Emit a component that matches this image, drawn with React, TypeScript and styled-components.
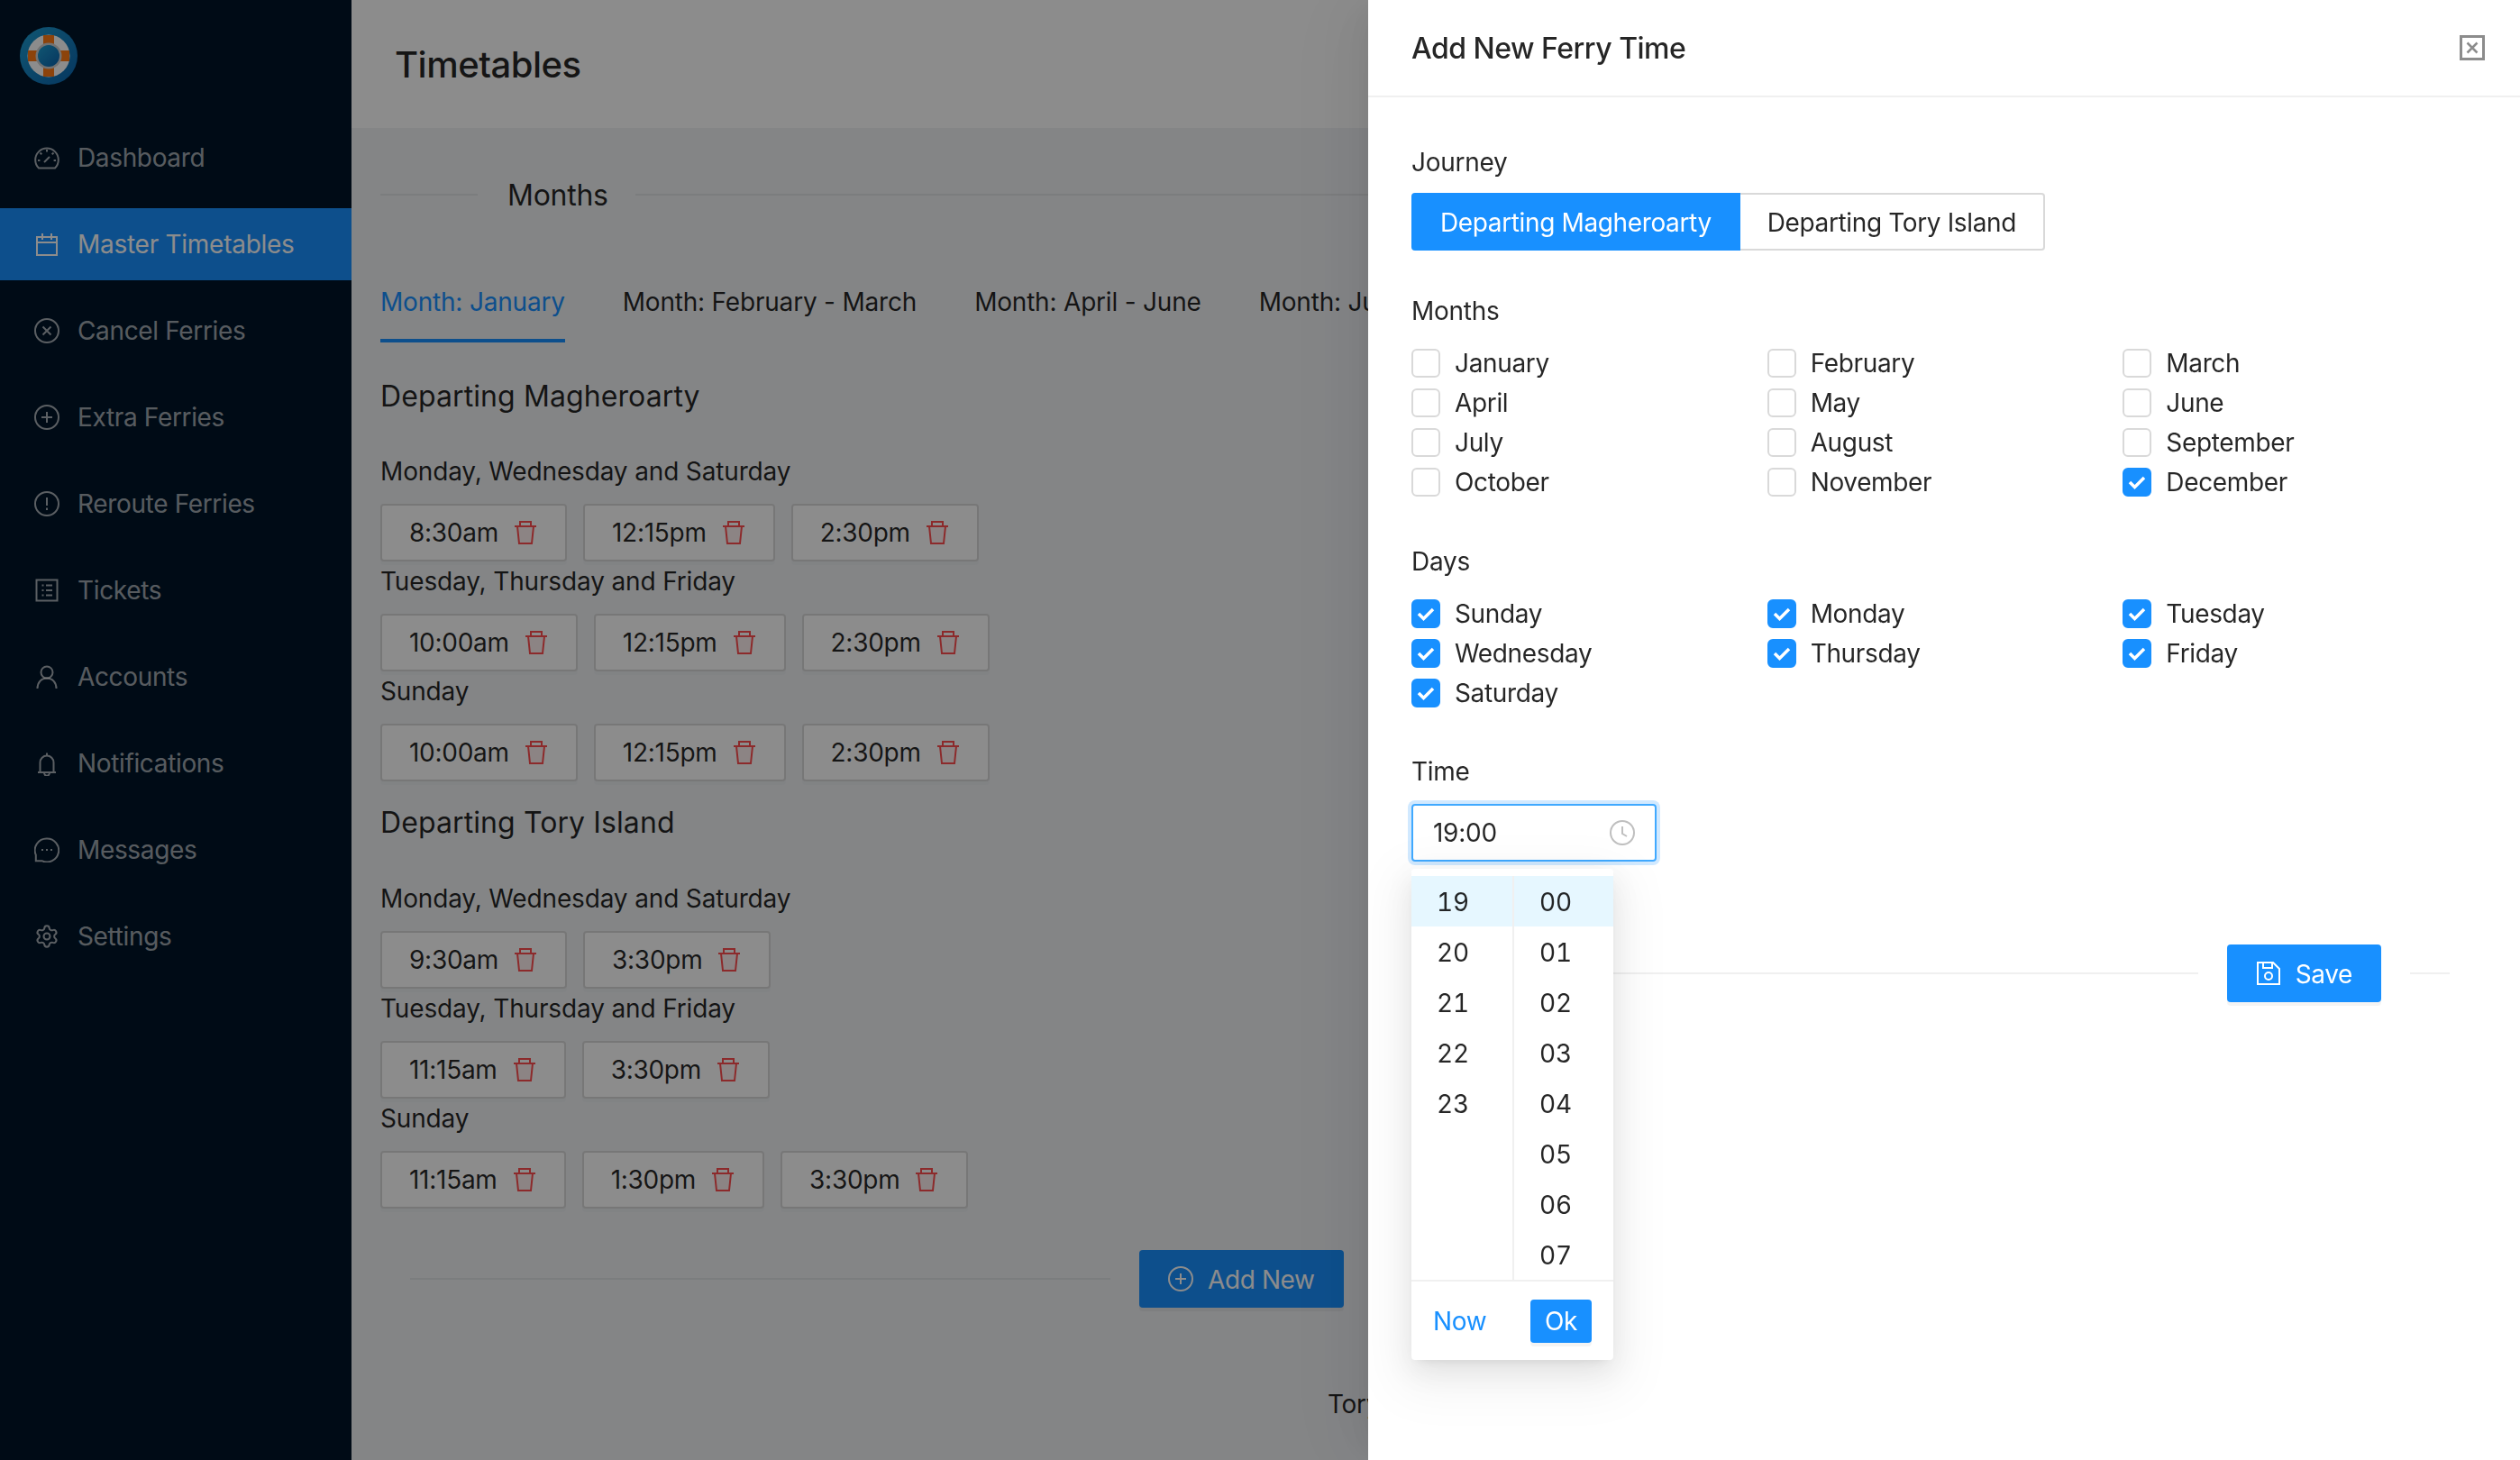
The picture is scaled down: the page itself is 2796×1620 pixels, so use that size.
import React, { FC, ReactNode } from "react";
import styled, { createGlobalStyle } from "styled-components";
import { Settings } from "lucide-react";

const GlobalStyle = createGlobalStyle`
  html, body {
    margin: 0;
    height: 100%;
    overflow: hidden;
    background: #f0f2f5;
    font-family: Inter, "Noto Sans", sans-serif;
    font-size: 28px;
    letter-spacing: -.27px;
    color: rgba(0, 0, 0, .85);
  }
  * { box-sizing: border-box; }
`;

const Page = styled.div`
  display: flex;
  width: 2796px;
  height: 1620px;
  overflow: hidden;
`;

const Sidebar = styled.aside`
  flex: 0 0 390px;
  background: #001529;
`;

const LogoBox = styled.div`
  height: 135px;
  padding: 30px 0 0 22px;
  svg { display: block; }
`;

const MenuList = styled.nav`
  display: flex;
  flex-direction: column;
  gap: 16px;
`;

const MenuItem = styled.div<{ $active?: boolean }>`
  display: flex;
  align-items: center;
  gap: 20px;
  height: 80px;
  padding-left: 38px;
  background: ${(p) => (p.$active ? "#1890ff" : "transparent")};
  color: ${(p) => (p.$active ? "#fff" : "rgba(255, 255, 255, .65)")};
  line-height: 44px;
  letter-spacing: ${(p) => (p.$active ? "-.27px" : "-.35px")};
`;

const Main = styled.main`
  flex: 1;
  min-width: 0;
`;

const TopBar = styled.header`
  display: flex;
  align-items: center;
  height: 142px;
  padding: 0 0 0 48px;
  background: #fff;
  font-size: 40px;
  font-weight: 500;
  letter-spacing: -.5px;
  margin-bottom: 52px;
`;

const Content = styled.div`
  padding: 0 32px;
`;

const SectionDivider = styled.div`
  display: flex;
  align-items: center;
  height: 44px;
  font-size: 32px;
  &::before {
    content: "";
    flex: 0 0 108px;
    height: 2px;
    background: rgba(0, 0, 0, .06);
    margin-right: 33px;
  }
  &::after {
    content: "";
    flex: 1;
    height: 2px;
    background: rgba(0, 0, 0, .06);
    margin-left: 30px;
  }
`;

const Tabs = styled.div`
  display: flex;
  gap: 64px;
  margin-top: 75px;
  letter-spacing: -.2px;
  white-space: nowrap;
`;

const Tab = styled.div<{ $active?: boolean }>`
  height: 67px;
  line-height: 45px;
  color: ${(p) => (p.$active ? "#1890ff" : "inherit")};
  border-bottom: 4px solid ${(p) => (p.$active ? "#1890ff" : "transparent")};
`;

const JourneyTitle = styled.h2<{ $top: number }>`
  margin: ${(p) => p.$top}px 0 0;
  font-size: 32px;
  font-weight: 400;
  letter-spacing: .1px;
  line-height: 49px;
  height: 48px;
`;

const DayGroups = styled.div<{ $top: number }>`
  margin-top: ${(p) => p.$top}px;
`;

const DayLabel = styled.div`
  height: 44px;
  line-height: 44px;
  margin-bottom: 14px;
  letter-spacing: -.15px;
`;

const ChipRow = styled.div`
  display: flex;
  gap: 18px;
`;

const Chip = styled.div`
  display: flex;
  align-items: center;
  gap: 16px;
  height: 64px;
  padding: 0 30px;
  background: #fff;
  border: 2px solid #d9d9d9;
  border-radius: 4px;
  box-shadow: 0 4px 0 rgba(0, 0, 0, .015);
  font-kerning: none;
  white-space: nowrap;
  svg { color: #ff4d4f; }
`;

const AddRow = styled.div`
  display: flex;
  align-items: center;
  margin: 46px 0 0 33px;
`;

const AddLine = styled.div`
  flex: 0 0 777px;
  height: 2px;
  background: rgba(0, 0, 0, .06);
`;

const PrimaryButton = styled.button`
  display: inline-flex;
  align-items: center;
  gap: 16px;
  height: 64px;
  padding: 0 32px;
  border: 0;
  border-radius: 4px;
  background: #1890ff;
  color: #fff;
  font: inherit;
  letter-spacing: -.4px;
  white-space: nowrap;
  box-shadow: 0 4px 0 rgba(0, 0, 0, .045);
`;

const ButtonText = styled.span`
  padding-top: 2px;
`;

const AddButton = styled(PrimaryButton)`
  margin-left: 32px;
`;

const Footer = styled.footer`
  margin-top: 85px;
  text-align: center;
  line-height: 44px;
`;

const Overlay = styled.div`
  position: fixed;
  inset: 0;
  background: rgba(0, 0, 0, .45);
`;

const Drawer = styled.section`
  position: fixed;
  top: 0;
  right: 0;
  bottom: 0;
  width: 1278px;
  background: #fff;
  box-shadow: -12px 0 32px -16px rgba(0, 0, 0, .08), -18px 0 56px 0 rgba(0, 0, 0, .05), -24px 0 96px 16px rgba(0, 0, 0, .03);
`;

const DrawerHeader = styled.div`
  display: flex;
  align-items: center;
  justify-content: space-between;
  height: 108px;
  padding: 0 39px 0 48px;
  border-bottom: 2px solid #f0f0f0;
  font-size: 32px;
  font-weight: 500;
  letter-spacing: -.5px;
  svg { display: block; color: rgba(0, 0, 0, .45); }
`;

const DrawerBody = styled.div`
  padding: 0 46px 0 48px;
`;

const FieldLabel = styled.div<{ $top: number }>`
  height: 44px;
  line-height: 44px;
  margin: ${(p) => p.$top}px 0 14px;
`;

const JourneyGroup = styled.div`
  display: flex;
  margin-top: -2px;
  letter-spacing: -.37px;
`;

const JourneyButton = styled.div<{ $active?: boolean }>`
  height: 64px;
  padding: 0 ${(p) => (p.$active ? 32 : 30)}px;
  line-height: ${(p) => (p.$active ? 66 : 62)}px;
  white-space: nowrap;
  color: ${(p) => (p.$active ? "#fff" : "inherit")};
  background: ${(p) => (p.$active ? "#1890ff" : "#fff")};
  border: ${(p) => (p.$active ? "0" : "2px solid #d9d9d9")};
  border-left: 0;
  border-radius: ${(p) => (p.$active ? "4px 0 0 4px" : "0 4px 4px 0")};
`;

const CheckGrid = styled.div`
  display: grid;
  grid-template-columns: repeat(3, 1fr);
  grid-auto-rows: 44px;
`;

const CheckLabel = styled.label`
  display: flex;
  align-items: center;
  gap: 16px;
  line-height: 46px;
  letter-spacing: -.35px;
`;

const CheckBox = styled.span<{ $checked?: boolean }>`
  display: flex;
  align-items: center;
  justify-content: center;
  width: 32px;
  height: 32px;
  border-radius: 6px;
  background: ${(p) => (p.$checked ? "#1890ff" : "#fff")};
  border: 2px solid ${(p) => (p.$checked ? "#1890ff" : "#d9d9d9")};
`;

const TimeField = styled.div`
  position: relative;
`;

const TimeInput = styled.div`
  display: flex;
  align-items: center;
  justify-content: space-between;
  width: 272px;
  height: 64px;
  padding: 0 22px;
  border: 2px solid #40a9ff;
  border-radius: 4px;
  box-shadow: 0 0 0 4px rgba(24, 144, 255, .2);
  line-height: 64px;
  svg { color: #bfbfbf; }
`;

const TimeDropdown = styled.div`
  position: absolute;
  top: 72px;
  left: 0;
  z-index: 2;
  width: 224px;
  padding-top: 8px;
  background: #fff;
  border-radius: 4px;
  box-shadow: 0 6px 12px -8px rgba(0, 0, 0, .12), 0 12px 32px 0 rgba(0, 0, 0, .08), 0 18px 56px 16px rgba(0, 0, 0, .05);
`;

const TimeColumns = styled.div`
  display: grid;
  grid-template-columns: 114px 110px;
  height: 450px;
  border-bottom: 2px solid #f0f0f0;
`;

const TimeColumn = styled.div<{ $first?: boolean }>`
  border-right: ${(p) => (p.$first ? "2px solid #f0f0f0" : "0")};
`;

const TimeCell = styled.div<{ $selected?: boolean; $indent: number }>`
  height: 56px;
  line-height: 58px;
  padding-left: ${(p) => p.$indent}px;
  font-variant: tabular-nums;
  background: ${(p) => (p.$selected ? "#e6f7ff" : "transparent")};
`;

const TimeFooter = styled.div`
  display: flex;
  align-items: center;
  justify-content: space-between;
  height: 87px;
  padding: 0 24px 0 24px;
  color: #1890ff;
`;

const OkButton = styled.div`
  width: 68px;
  height: 48px;
  line-height: 48px;
  text-align: center;
  border-radius: 4px;
  background: #1890ff;
  color: #fff;
  box-shadow: 0 4px 0 rgba(0, 0, 0, .045);
`;

const SaveRow = styled.div`
  display: flex;
  align-items: center;
  gap: 32px;
  margin: 92px 32px 0 0;
`;

const SaveLine = styled.div<{ $fixed?: boolean }>`
  flex: ${(p) => (p.$fixed ? "0 0 44px" : "1")};
  height: 2px;
  background: #f0f0f0;
`;

const Glyph: FC<{ size?: number; children: ReactNode }> = ({ size = 28, children }) => (
  <svg
    width={size}
    height={size}
    viewBox="0 0 28 28"
    fill="none"
    stroke="currentColor"
    strokeWidth={2}
    style={{ flexShrink: 0 }}
  >
    {children}
  </svg>
);

const DashboardIcon = () => (
  <Glyph>
    <path d="M5 25.500h18a12.800 12.800 0 1 0-18 0z" />
    <path d="M11 19l6-6M14 5v2.500M6.500 8.500l1.800 1.800M21.500 8.500l-1.800 1.800M4 17h2.400M21.600 17H24" />
  </Glyph>
);
const CalendarIcon = () => (
  <Glyph>
    <path d="M3 6h22v20H3zM3 12h22M9 2v7M19 2v7" />
  </Glyph>
);
const CancelIcon = () => (
  <Glyph>
    <circle cx="14" cy="14" r="13" />
    <path d="M9.500 9.500l9 9M18.500 9.500l-9 9" />
  </Glyph>
);
const PlusCircleIcon = () => (
  <Glyph>
    <circle cx="14" cy="14" r="13" />
    <path d="M14 8v12M8 14h12" />
  </Glyph>
);
const RerouteIcon = () => (
  <Glyph>
    <circle cx="14" cy="14" r="13" />
    <path d="M14 7v9M14 18.500v2.500" />
  </Glyph>
);
const TicketsIcon = () => (
  <Glyph>
    <path d="M2.500 2.500h23v23h-23z" />
    <path d="M8.500 8.500h2M13 8.500h7M8.500 14h2M13 14h7M8.500 19.500h2M13 19.500h7" />
  </Glyph>
);
const AccountsIcon = () => (
  <Glyph>
    <circle cx="14" cy="9" r="6.500" />
    <path d="M3.500 27c0-6.500 4-11.500 10.500-11.500S24.500 20.500 24.500 27" />
  </Glyph>
);
const BellIcon = () => (
  <Glyph>
    <path d="M4 24h20M6.500 24V13a7.500 7.500 0 0 1 15 0v11M14 2.500v3M11 24c0 5 6 5 6 0" />
  </Glyph>
);
const MessagesIcon = () => (
  <Glyph>
    <path d="M14 1.500a13 13 0 1 1-5.500 24.700H1.800v-6.500A13 13 0 0 1 14 1.500z" />
    <path d="M8 14h2M13 14h2M18 14h2" />
  </Glyph>
);
const TrashIcon = () => (
  <Glyph>
    <path d="M5 7l2 19h14l2-19z" fill="currentColor" fillOpacity={0.08} />
    <path d="M2 7h24M8 7V2h12v5" />
  </Glyph>
);
const CloseSquareIcon = () => (
  <Glyph>
    <path d="M1.500 1.500h25v25h-25z" strokeWidth={3} />
    <path d="M8.500 8.500l11 11M19.500 8.500l-11 11" strokeWidth={2.500} />
  </Glyph>
);
const ClockIcon = () => (
  <Glyph>
    <circle cx="14" cy="14" r="13" />
    <path d="M14 7v8l5 3" />
  </Glyph>
);
const SaveIcon = () => (
  <Glyph>
    <path d="M2 2h17l7 7v17H2zM8 2v6h10V2" />
    <circle cx="14" cy="17" r="4" />
  </Glyph>
);

const CheckMark = () => (
  <svg width="22" height="18" viewBox="0 0 22 18" fill="none" stroke="#fff" strokeWidth={3.5}>
    <path d="M3 9l5.500 5.500L19 4" />
  </svg>
);

const Logo = () => (
  <svg width="64" height="64" viewBox="0 0 64 64">
    <defs>
      <linearGradient id="logoBg" x1="0" y1="0" x2="1" y2="1">
        <stop offset="0" stopColor="#1f9ed1" />
        <stop offset="1" stopColor="#0b63ad" />
      </linearGradient>
    </defs>
    <circle cx="32" cy="32" r="32" fill="url(#logoBg)" />
    <circle cx="32" cy="32" r="23.500" fill="#fff" />
    <path d="M26 9h12v46H26zM9 26h46v12H9z" fill="#ff7a14" />
    <circle cx="32" cy="32" r="14.500" fill="#d0d0d0" />
    <circle cx="32" cy="32" r="12" fill="url(#logoBg)" />
  </svg>
);

const menu = [
  { label: "Dashboard", icon: <DashboardIcon /> },
  { label: "Master Timetables", icon: <CalendarIcon />, active: true },
  { label: "Cancel Ferries", icon: <CancelIcon /> },
  { label: "Extra Ferries", icon: <PlusCircleIcon /> },
  { label: "Reroute Ferries", icon: <RerouteIcon /> },
  { label: "Tickets", icon: <TicketsIcon /> },
  { label: "Accounts", icon: <AccountsIcon /> },
  { label: "Notifications", icon: <BellIcon /> },
  { label: "Messages", icon: <MessagesIcon /> },
  { label: "Settings", icon: <Settings size={28} strokeWidth={1.75} /> },
];

const monthTabs = ["Month: January", "Month: February - March", "Month: April - June", "Month: July - August"];

const journeys = [
  {
    title: "Departing Magheroarty",
    top: 35,
    groupTop: 38,
    days: [
      { label: "Monday, Wednesday and Saturday", times: ["8:30am", "12:15pm", "2:30pm"] },
      { label: "Tuesday, Thursday and Friday", times: ["10:00am", "12:15pm", "2:30pm"] },
      { label: "Sunday", times: ["10:00am", "12:15pm", "2:30pm"] },
    ],
  },
  {
    title: "Departing Tory Island",
    top: 21,
    groupTop: 39,
    days: [
      { label: "Monday, Wednesday and Saturday", times: ["9:30am", "3:30pm"] },
      { label: "Tuesday, Thursday and Friday", times: ["11:15am", "3:30pm"] },
      { label: "Sunday", times: ["11:15am", "1:30pm", "3:30pm"] },
    ],
  },
];

const months = [
  "January", "February", "March", "April", "May", "June",
  "July", "August", "September", "October", "November", "December",
];
const checkedMonths = ["December"];
const days = ["Sunday", "Monday", "Tuesday", "Wednesday", "Thursday", "Friday", "Saturday"];

const hours = ["19", "20", "21", "22", "23"];
const minutes = ["00", "01", "02", "03", "04", "05", "06", "07"];

const App: FC = () => (
  <>
    <GlobalStyle />
    <Page>
      <Sidebar>
        <LogoBox>
          <Logo />
        </LogoBox>
        <MenuList>
          {menu.map((item) => (
            <MenuItem key={item.label} $active={item.active}>
              {item.icon}
              {item.label}
            </MenuItem>
          ))}
        </MenuList>
      </Sidebar>
      <Main>
        <TopBar>Timetables</TopBar>
        <Content>
          <SectionDivider>Months</SectionDivider>
          <Tabs>
            {monthTabs.map((tab, i) => (
              <Tab key={tab} $active={i === 0}>{tab}</Tab>
            ))}
          </Tabs>
          {journeys.map((journey) => (
            <div key={journey.title}>
              <JourneyTitle $top={journey.top}>{journey.title}</JourneyTitle>
              <DayGroups $top={journey.groupTop}>
                {journey.days.map((day) => (
                  <div key={day.label}>
                    <DayLabel>{day.label}</DayLabel>
                    <ChipRow>
                      {day.times.map((time) => (
                        <Chip key={time}>
                          {time}
                          <TrashIcon />
                        </Chip>
                      ))}
                    </ChipRow>
                  </div>
                ))}
              </DayGroups>
            </div>
          ))}
          <AddRow>
            <AddLine />
            <AddButton>
              <PlusCircleIcon />
              <ButtonText>Add New</ButtonText>
            </AddButton>
          </AddRow>
          <Footer>Tory Island Ferries</Footer>
        </Content>
      </Main>
    </Page>
    <Overlay />
    <Drawer>
      <DrawerHeader>
        Add New Ferry Time
        <CloseSquareIcon />
      </DrawerHeader>
      <DrawerBody>
        <FieldLabel $top={50}>Journey</FieldLabel>
        <JourneyGroup>
          <JourneyButton $active>Departing Magheroarty</JourneyButton>
          <JourneyButton>Departing Tory Island</JourneyButton>
        </JourneyGroup>
        <FieldLabel $top={45}>Months</FieldLabel>
        <CheckGrid>
          {months.map((month) => {
            const checked = checkedMonths.includes(month);
            return (
              <CheckLabel key={month}>
                <CheckBox $checked={checked}>{checked && <CheckMark />}</CheckBox>
                {month}
              </CheckLabel>
            );
          })}
        </CheckGrid>
        <FieldLabel $top={44}>Days</FieldLabel>
        <CheckGrid>
          {days.map((day) => (
            <CheckLabel key={day}>
              <CheckBox $checked>
                <CheckMark />
              </CheckBox>
              {day}
            </CheckLabel>
          ))}
        </CheckGrid>
        <FieldLabel $top={43}>Time</FieldLabel>
        <TimeField>
          <TimeInput>
            19:00
            <ClockIcon />
          </TimeInput>
          <TimeDropdown>
            <TimeColumns>
              <TimeColumn $first>
                {hours.map((hour, i) => (
                  <TimeCell key={hour} $selected={i === 0} $indent={28}>{hour}</TimeCell>
                ))}
              </TimeColumn>
              <TimeColumn>
                {minutes.map((minute, i) => (
                  <TimeCell key={minute} $selected={i === 0} $indent={28}>{minute}</TimeCell>
                ))}
              </TimeColumn>
            </TimeColumns>
            <TimeFooter>
              Now
              <OkButton>Ok</OkButton>
            </TimeFooter>
          </TimeDropdown>
        </TimeField>
        <SaveRow>
          <SaveLine />
          <PrimaryButton>
            <SaveIcon />
            <ButtonText>Save</ButtonText>
          </PrimaryButton>
          <SaveLine $fixed />
        </SaveRow>
      </DrawerBody>
    </Drawer>
  </>
);

export default App;
